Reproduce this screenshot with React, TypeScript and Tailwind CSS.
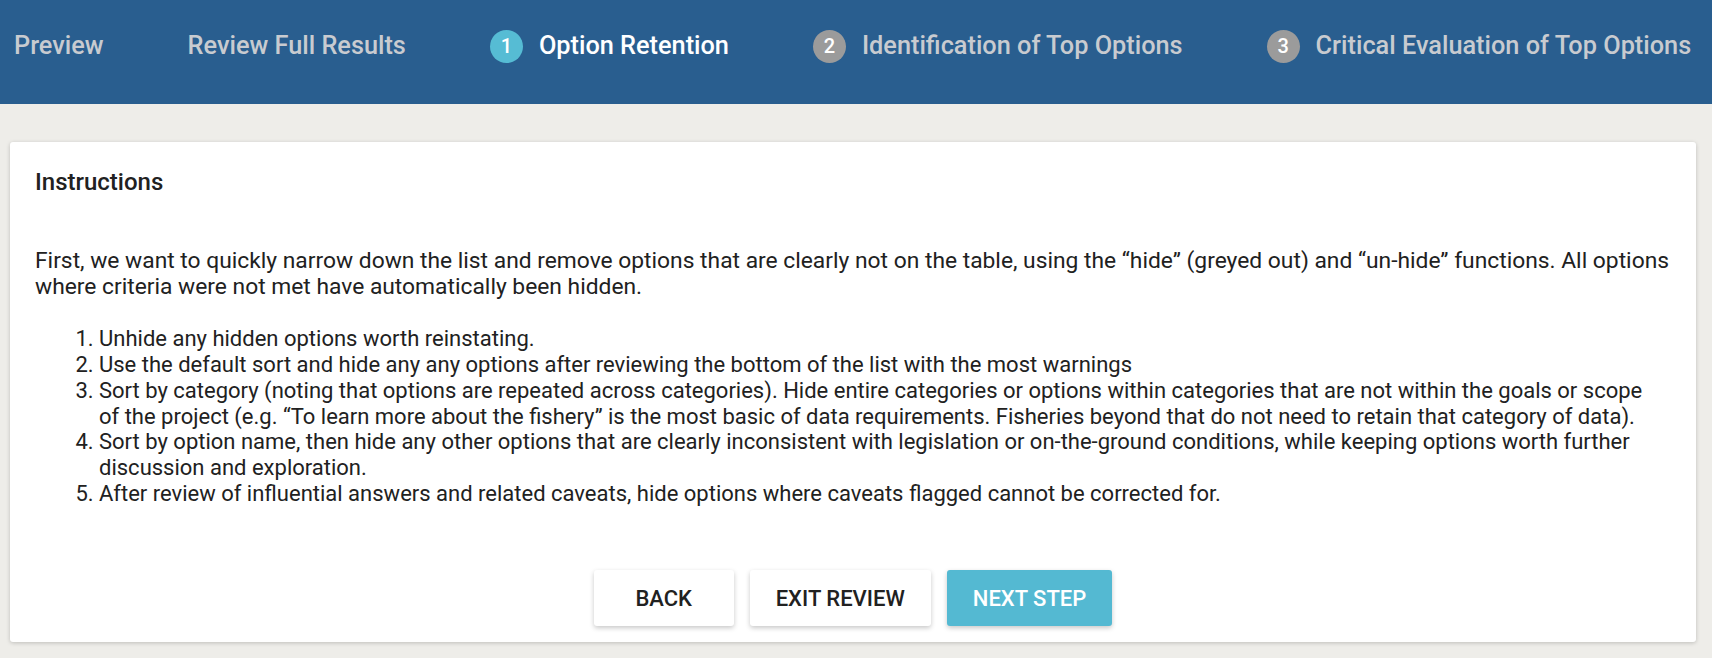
const steps = [
  { label: "Preview" },
  { label: "Review Full Results" },
  { label: "Option Retention", num: 1, active: true },
  { label: "Identification of Top Options", num: 2 },
  { label: "Critical Evaluation of Top Options", num: 3 },
];

const items = [
  "Unhide any hidden options worth reinstating.",
  "Use the default sort and hide any any options after reviewing the bottom of the list with the most warnings",
  "Sort by category (noting that options are repeated across categories). Hide entire categories or options within categories that are not within the goals or scope of the project (e.g. \u201cTo learn more about the fishery\u201d is the most basic of data requirements. Fisheries beyond that do not need to retain that category of data).",
  "Sort by option name, then hide any other options that are clearly inconsistent with legislation or on-the-ground conditions, while keeping options worth further discussion and exploration.",
  "After review of influential answers and related caveats, hide options where caveats flagged cannot be corrected for.",
];

function StepLink({ label, num, active }: { label: string; num?: number; active?: boolean }) {
  return (
    <div className="flex items-center gap-[16px] whitespace-nowrap">
      {num !== undefined && (
        <span
          className={`flex h-[33px] w-[33px] items-center justify-center rounded-full text-[20px] leading-none font-medium text-white ${
            active ? "bg-[#56bcd4]" : "bg-[#9b9b9b]"
          }`}
        >
          {num}
        </span>
      )}
      <span className={`text-[25.3px] leading-[30px] font-medium ${active ? "text-white" : "text-[#c8cbd0]"}`}>
        {label}
      </span>
    </div>
  );
}

export default function App() {
  return (
    <div className="min-h-[658px] bg-[#eeede9] font-['Roboto',sans-serif] text-[#212121]">
      <div className="h-[104px] bg-[#295e8f] pt-[29px] pl-[14px]">
        <div className="flex h-[34px] items-center gap-[84px]">
          {steps.map((s) => (
            <StepLink key={s.label} label={s.label} num={s.num} active={s.active} />
          ))}
        </div>
      </div>

      <div className="ml-[10px] mr-[16px] mt-[38px] rounded-[3px] bg-white pl-[25px] pr-[18px] pt-[26px] pb-[16px] shadow-[0_1px_4px_rgba(0,0,0,0.2)]">
        <h2 className="text-[24px] leading-[28px] font-medium">Instructions</h2>
        <p className="mt-[52px] text-[22.8px] leading-[25.7px]">
          First, we want to quickly narrow down the list and remove options that are clearly not on the table, using the
          {" \u201chide\u201d (greyed out) and \u201cun-hide\u201d "}functions. All options where criteria were not met have
          automatically been hidden.
        </p>
        <ol className="mt-[27px] list-decimal pl-[64px] pr-[12px] text-[22px] leading-[25.7px]">
          {items.map((t) => (
            <li key={t}>{t}</li>
          ))}
        </ol>
        <div className="mt-[64px] flex justify-center gap-[16px] pr-[7px]">
          <button className="h-[56px] min-w-[140px] rounded-[3px] bg-white px-[26px] text-[22px] font-medium shadow-[0_2px_5px_rgba(0,0,0,0.22)]">
            BACK
          </button>
          <button className="h-[56px] min-w-[140px] rounded-[3px] bg-white px-[26px] text-[22px] font-medium shadow-[0_2px_5px_rgba(0,0,0,0.22)]">
            EXIT REVIEW
          </button>
          <button className="h-[56px] min-w-[140px] rounded-[3px] bg-[#54b9d2] px-[26px] text-[22px] font-medium text-white shadow-[0_2px_5px_rgba(0,0,0,0.22)]">
            NEXT STEP
          </button>
        </div>
      </div>
    </div>
  );
}
